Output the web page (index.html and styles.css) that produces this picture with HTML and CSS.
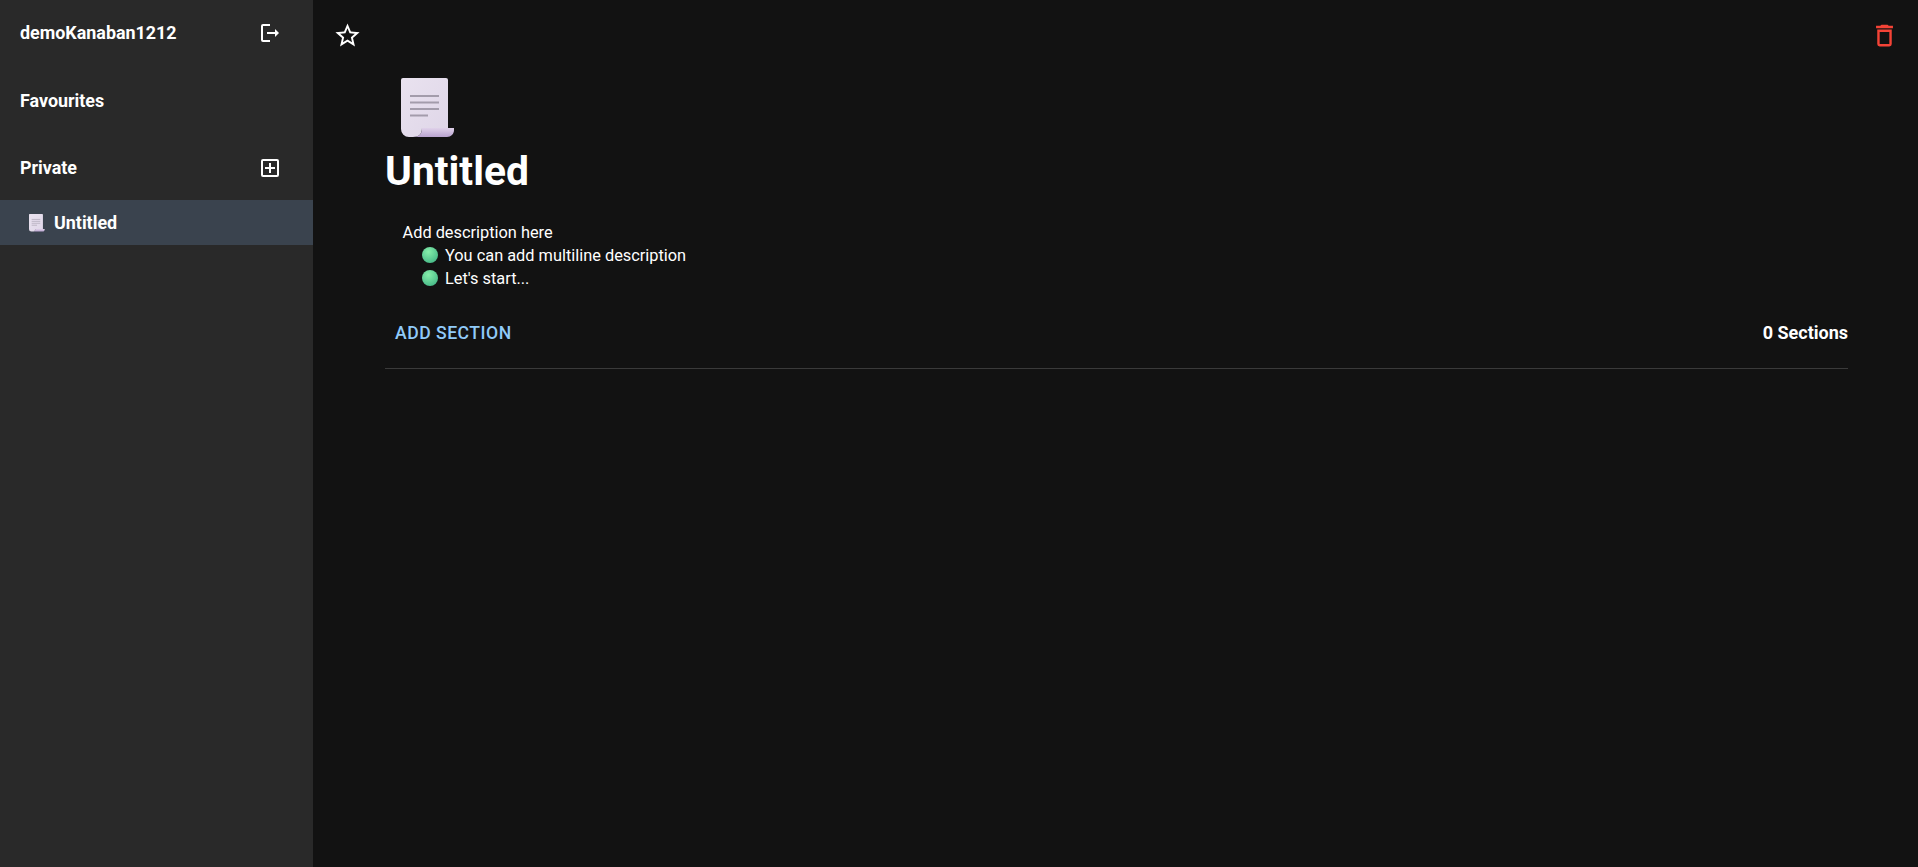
FILE: index.html
```html
<!DOCTYPE html>
<html lang="en">
<head>
    <meta charset="UTF-8">
    <title>Kanban</title>
    <link rel="stylesheet" href="styles.css">
</head>
<body>
    <svg class="defs" width="0" height="0">
        <defs>
            <linearGradient id="paper" x1="0" y1="0" x2="1" y2="1">
                <stop offset="0" stop-color="#e9e2ef"/>
                <stop offset="1" stop-color="#dfd6e8"/>
            </linearGradient>
            <linearGradient id="curl" x1="0" y1="0" x2="0" y2="1">
                <stop offset="0" stop-color="#e0d2ea"/>
                <stop offset="1" stop-color="#b9a3cf"/>
            </linearGradient>
            <radialGradient id="ball" cx="0.4" cy="0.3" r="0.8">
                <stop offset="0" stop-color="#86eeaa"/>
                <stop offset="1" stop-color="#42b585"/>
            </radialGradient>
            <symbol id="doc" viewBox="0 0 54 60">
                <path d="M2 0h43a2 2 0 0 1 2 2v48H21c0 6-3 9-9 9H8a8 8 0 0 1-8-8V2a2 2 0 0 1 2-2z" fill="url(#paper)"/>
                <path d="M12 59c6 0 9-3 9-9h32v2c0 4-3 7-7 7z" fill="url(#curl)"/>
                <path d="M9 18h29M9 24.500h29M9 31h29M9 37.500h18" stroke="#a39cab" stroke-width="2" fill="none"/>
            </symbol>
        </defs>
    </svg>

    <div class="app">
        <aside class="sidebar">
            <div class="side-row side-top">
                <span class="side-label">demoKanaban1212</span>
                <svg class="icon" viewBox="0 0 24 24"><path d="M5 5h7V3H5a2 2 0 0 0-2 2v14a2 2 0 0 0 2 2h7v-2H5V5zm16 7-4-4v3H9v2h8v3l4-4z"/></svg>
            </div>
            <div class="side-row side-fav">
                <span class="side-label">Favourites</span>
            </div>
            <div class="side-row side-private">
                <span class="side-label">Private</span>
                <svg class="icon" viewBox="0 0 24 24"><path d="M19 3H5a2 2 0 0 0-2 2v14a2 2 0 0 0 2 2h14a2 2 0 0 0 2-2V5a2 2 0 0 0-2-2zm0 16H5V5h14v14zm-8-2h2v-4h4v-2h-4V7h-2v4H7v2h4v4z"/></svg>
            </div>
            <div class="board-item">
                <svg class="board-emoji"><use href="#doc"/></svg>
                <span class="side-label">Untitled</span>
            </div>
        </aside>

        <main class="main">
            <div class="toolbar">
                <svg class="icon star" viewBox="0 0 24 24"><path d="m22 9.240-7.190-.620L12 2 9.190 8.630 2 9.240l5.460 4.730L5.820 21 12 17.270 18.180 21l-1.630-7.030L22 9.240zM12 15.400l-3.760 2.270 1-4.280-3.320-2.880 4.380-.380L12 6.100l1.710 4.040 4.380.380-3.320 2.880 1 4.280L12 15.400z"/></svg>
                <svg class="icon trash" viewBox="0 0 24 24"><path d="M6 19a2 2 0 0 0 2 2h8a2 2 0 0 0 2-2V7H6v12zM8 9h8v10H8V9zm7.500-5-1-1h-5l-1 1H5v2h14V4h-3.500z"/></svg>
            </div>
            <div class="content">
                <svg class="page-emoji"><use href="#doc"/></svg>
                <h1 class="title">Untitled</h1>
                <div class="description">
                    <p>Add description here</p>
                    <p class="bullet"><svg class="ball" viewBox="0 0 16 16"><circle cx="8" cy="8" r="8" fill="url(#ball)"/></svg>You can add multiline description</p>
                    <p class="bullet"><svg class="ball" viewBox="0 0 16 16"><circle cx="8" cy="8" r="8" fill="url(#ball)"/></svg>Let's start...</p>
                </div>
                <div class="section-bar">
                    <button class="add-section">ADD SECTION</button>
                    <span class="section-count">0 Sections</span>
                </div>
                <div class="divider"></div>
            </div>
        </main>
    </div>
</body>
</html>
```
FILE: styles.css
```css
* {
    margin: 0;
    padding: 0;
    box-sizing: border-box;
}
html, body {
    height: 100%;
}
body {
    background-color: #121212;
    color: #fff;
    font-family: 'Roboto', sans-serif;
    font-size: 16px;
    overflow: hidden;
}
.defs {
    position: absolute;
}
.app {
    display: flex;
    height: 867px;
}
.sidebar {
    width: 313px;
    flex-shrink: 0;
    background-color: #292929;
}
.side-row {
    display: flex;
    justify-content: space-between;
    align-items: center;
    height: 24px;
    padding: 0 31px 0 20px;
}
.side-top {
    margin-top: 21px;
}
.side-fav {
    margin-top: 44px;
}
.side-private {
    margin-top: 43px;
}
.side-label {
    font-size: 17.900px;
    font-weight: 700;
    line-height: 24px;
}
.icon {
    width: 24px;
    height: 24px;
    fill: #fff;
    display: block;
}
.board-item {
    display: flex;
    align-items: center;
    height: 45px;
    margin-top: 20px;
    padding-left: 29px;
    background-color: #3a434e;
}
.board-emoji {
    width: 16px;
    height: 18px;
    margin-right: 9px;
}
.main {
    flex: 1;
    min-width: 0;
}
.toolbar {
    display: flex;
    justify-content: space-between;
    padding: 21px 19px 0 20px;
}
.star,
.trash {
    width: 29px;
    height: 29px;
}
.trash {
    fill: #f44336;
}
.content {
    padding: 28px 70px 0 72px;
}
.page-emoji {
    display: block;
    width: 54px;
    height: 60px;
    margin-left: 16px;
}
.title {
    font-size: 40.800px;
    font-weight: 700;
    line-height: 47px;
    margin-top: 10px;
}
.description {
    margin-top: 26px;
    padding-left: 17.500px;
    font-size: 16.350px;
    line-height: 23px;
}
.bullet {
    display: flex;
    align-items: center;
    padding-left: 19.500px;
}
.ball {
    width: 16px;
    height: 16px;
    margin-right: 7px;
    margin-bottom: 1px;
}
.section-bar {
    display: flex;
    justify-content: space-between;
    align-items: center;
    height: 36px;
    margin-top: 25px;
}
.add-section {
    background: none;
    border: none;
    color: #90caf9;
    font-family: 'Roboto', sans-serif;
    font-size: 17.600px;
    font-weight: 500;
    padding: 0 10px;
    letter-spacing: 0.5px;
}
.section-count {
    font-size: 18px;
    font-weight: 700;
    margin-bottom: 1px;
}
.divider {
    height: 1px;
    margin-top: 17px;
    background-color: #3a3a3a;
}
```
